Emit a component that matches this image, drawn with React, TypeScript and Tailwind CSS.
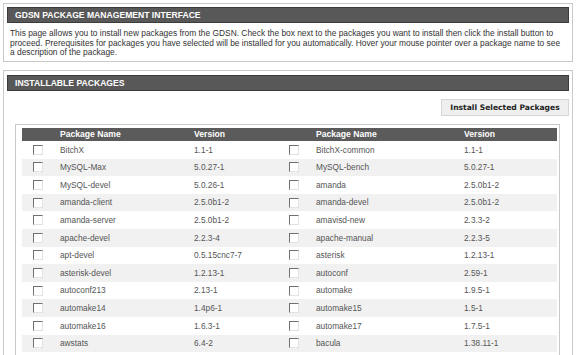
import React from "react";

interface Pkg {
    name: string;
    version: string;
}

const rows: [Pkg, Pkg][] = [
    [{ name: "BitchX", version: "1.1-1" }, { name: "BitchX-common", version: "1.1-1" }],
    [{ name: "MySQL-Max", version: "5.0.27-1" }, { name: "MySQL-bench", version: "5.0.27-1" }],
    [{ name: "MySQL-devel", version: "5.0.26-1" }, { name: "amanda", version: "2.5.0b1-2" }],
    [{ name: "amanda-client", version: "2.5.0b1-2" }, { name: "amanda-devel", version: "2.5.0b1-2" }],
    [{ name: "amanda-server", version: "2.5.0b1-2" }, { name: "amavisd-new", version: "2.3.3-2" }],
    [{ name: "apache-devel", version: "2.2.3-4" }, { name: "apache-manual", version: "2.2.3-5" }],
    [{ name: "apt-devel", version: "0.5.15cnc7-7" }, { name: "asterisk", version: "1.2.13-1" }],
    [{ name: "asterisk-devel", version: "1.2.13-1" }, { name: "autoconf", version: "2.59-1" }],
    [{ name: "autoconf213", version: "2.13-1" }, { name: "automake", version: "1.9.5-1" }],
    [{ name: "automake14", version: "1.4p6-1" }, { name: "automake15", version: "1.5-1" }],
    [{ name: "automake16", version: "1.6.3-1" }, { name: "automake17", version: "1.7.5-1" }],
    [{ name: "awstats", version: "6.4-2" }, { name: "bacula", version: "1.38.11-1" }],
];

const Checkbox = () => (
    <span className="block w-[10px] h-[10px] bg-white border-t-[1.5px] border-l-[1.5px] border-t-[#707070] border-l-[#707070] border-b border-r border-b-[#e2e2e2] border-r-[#e2e2e2]" />
);

const SectionHeader = ({ title }: { title: string }) => (
    <div className="h-[16px] flex items-center pl-[7px] bg-[#585858] border border-[#3c3c3c] text-white font-bold text-[8.6px] leading-none">
        {title}
    </div>
);

export default function App() {
    return (
        <div className="w-[576px] h-[355px] overflow-hidden bg-white p-[3px] font-['Liberation_Sans',Arial,sans-serif]">
            {/* intro */}
            <div className="h-[59px] border border-[#c9c9c9] px-[3px] pt-[3px]">
                <SectionHeader title="GDSN PACKAGE MANAGEMENT INTERFACE" />
                <p className="mt-[6px] pl-[3px] text-[8.4px] leading-[9.5px] text-[#333] whitespace-nowrap">
                    This page allows you to install new packages from the GDSN. Check the box next to the packages you want to install then click the install button to
                    <br />
                    proceed. Prerequisites for packages you have selected will be installed for you automatically. Hover your mouse pointer over a package name to see
                    <br />
                    a description of the package.
                </p>
            </div>

            {/* packages */}
            <div className="mt-[8px] h-[300px] border border-[#c9c9c9] px-[3px] pt-[4px]">
                <SectionHeader title="INSTALLABLE PACKAGES" />
                <div className="flex justify-end mt-[8px]">
                    <button className="h-[17px] w-[128px] bg-[#efefef] border border-[#d6d6d6] text-[#222] font-bold text-[7.6px] font-['DejaVu_Sans',Verdana,sans-serif]">
                        Install Selected Packages
                    </button>
                </div>
                <div className="mt-[8px] ml-[8px] mr-[9px] border border-[#c9c9c9] pl-[6px] pr-[2px] pt-[3px] h-[240px]">
                    <div className="grid grid-cols-[34px_134px_90px_32px_148px_98px] h-[13px] items-center bg-[#5b5b5b] text-white font-bold text-[8.6px]">
                        <span />
                        <span className="pl-[4px]">Package Name</span>
                        <span className="pl-[4px]">Version</span>
                        <span />
                        <span className="pl-[4px]">Package Name</span>
                        <span className="pl-[4px]">Version</span>
                    </div>
                    {rows.map(([a, b], i) => (
                        <div
                            key={a.name}
                            className={`grid grid-cols-[34px_134px_90px_32px_148px_98px] h-[17.6px] items-center text-[8.3px] text-[#555] ${i % 2 === 1 ? "bg-[#f1f1f1]" : "bg-white"}`}
                        >
                            <span className="pl-[11px]"><Checkbox /></span>
                            <span className="pl-[4px]">{a.name}</span>
                            <span className="pl-[4px]">{a.version}</span>
                            <span className="pl-[9px]"><Checkbox /></span>
                            <span className="pl-[4px]">{b.name}</span>
                            <span className="pl-[4px]">{b.version}</span>
                        </div>
                    ))}
                </div>
            </div>
        </div>
    );
}
